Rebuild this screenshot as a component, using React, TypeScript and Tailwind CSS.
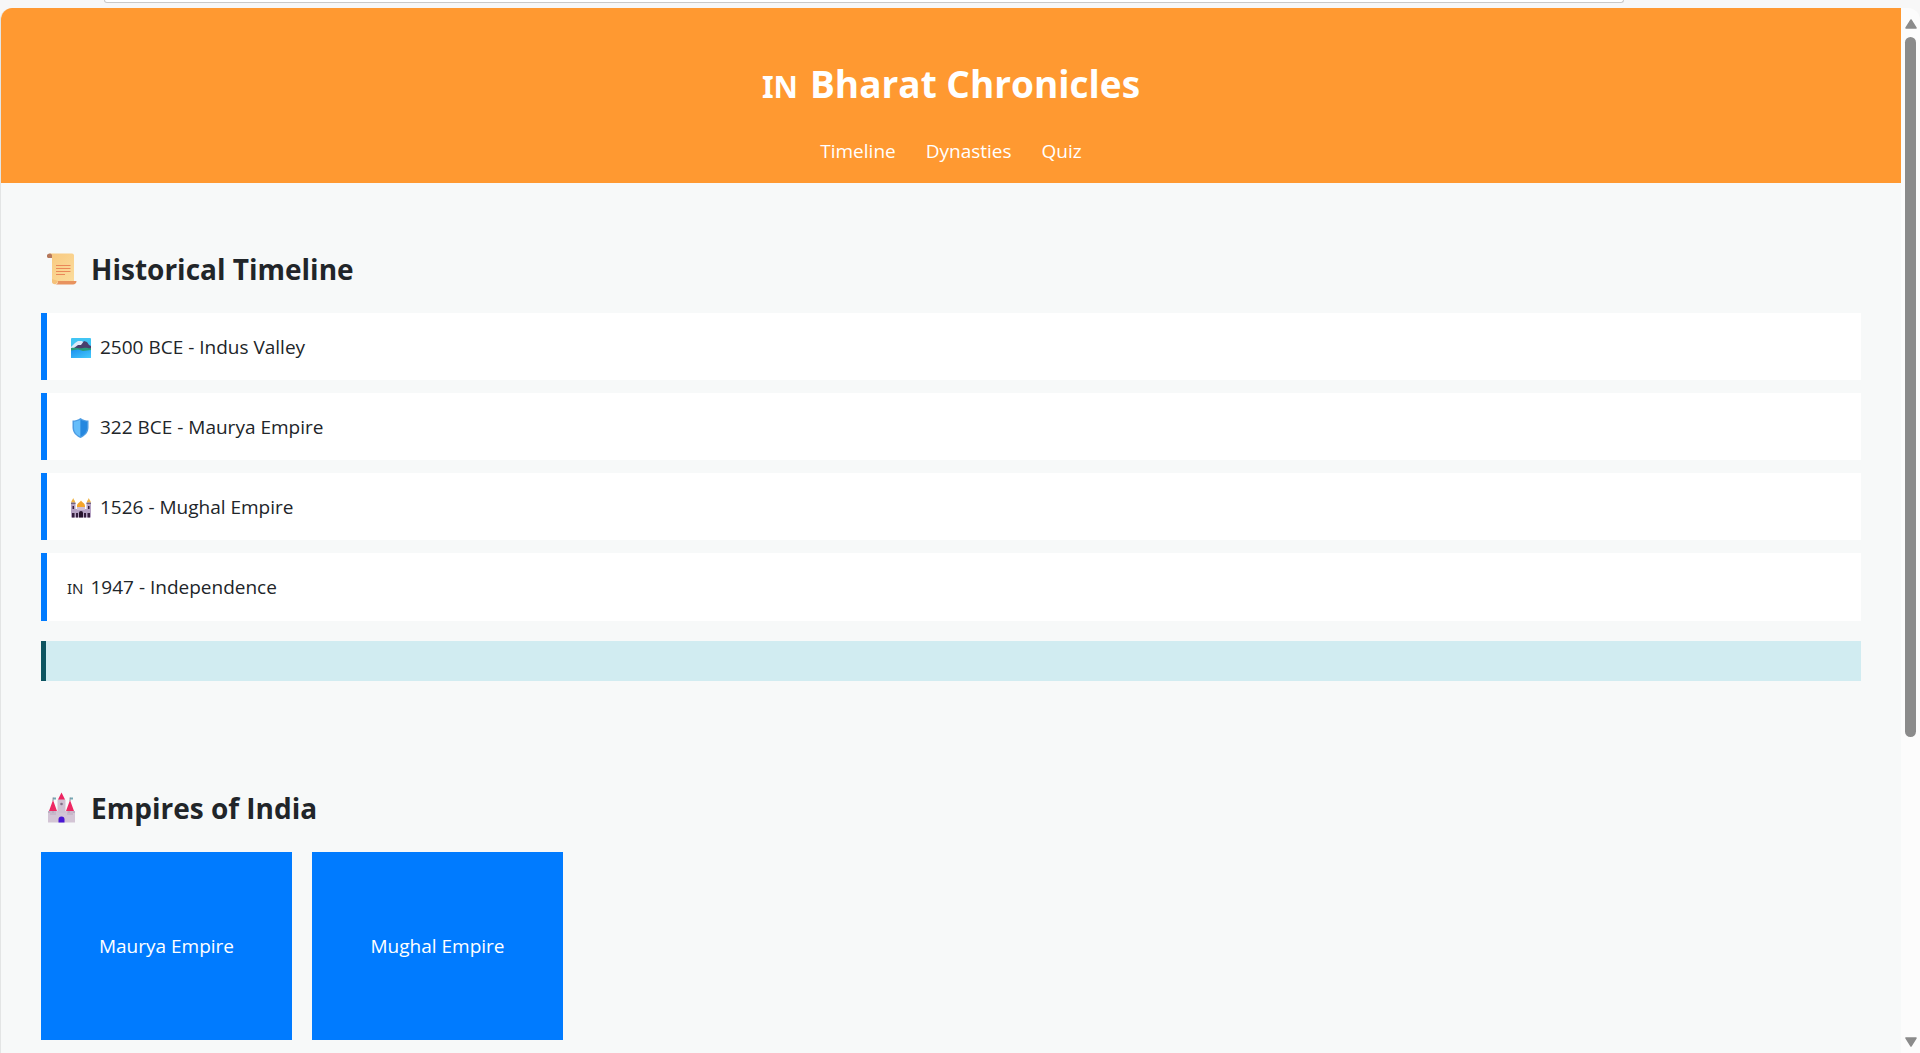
import type { ReactNode } from 'react';

const ScrollIcon = () => (
  <svg viewBox="0 0 30 32" className="w-[30px] h-8 shrink-0" aria-hidden="true">
    <defs>
      <linearGradient id="paper" x1="0" y1="0" x2="1" y2="1">
        <stop offset="0" stopColor="#f8c87e" />
        <stop offset="1" stopColor="#fbdc9c" />
      </linearGradient>
    </defs>
    <path d="M3 0.500h22a2 2 0 0 1 2 2V28H5V5H1.500A2.500 2.500 0 0 1 3 0.500z" fill="url(#paper)" />
    <path d="M3 0.500c-4 0-4 4.500-1 4.500h3V2.500c0-1-1-2-2-2z" fill="#b5785c" />
    <path d="M11 28h18.500c0 2-1.500 3.500-3.500 3.500H8c2 0 3-1.500 3-3.500z" fill="#e8935f" />
    <path d="M5 26v3c0 3 6 3 6-1z" fill="#f5c27a" />
    <path d="M9 12.500h14.500M9 15.500h14.500M9 18.500h14.500M9 21.500h9" stroke="#ea8758" strokeWidth="1" />
  </svg>
);

const CastleIcon = () => (
  <svg viewBox="0 0 30 32" className="w-[30px] h-8 shrink-0" aria-hidden="true">
    <path d="M1 19h27v11.500H1z" fill="#d3c5d5" />
    <path d="M3 17h6v6H3zM20 17h6v6h-6z" fill="#c7b8ca" />
    <path d="M10.500 8l4-3L18.500 8v13h-8z" fill="#cfc1d2" />
    <path d="M14.500 0.500L18 7.500h-7z" fill="#ec2460" />
    <path d="M6 8l4 11H2zM23 8l4 11h-8z" fill="#ed2863" />
    <path d="M6 5.500h3v2H6zM23 5.500h3v2h-3z" fill="#75a9b5" />
    <path d="M6 5.500V9M23 5.500V9" stroke="#8b8390" strokeWidth="0.800" />
    <circle cx="14.500" cy="12" r="1.300" fill="#837088" />
    <path d="M11.500 30.500v-3a3 3 0 0 1 6 0v3z" fill="#4a16d4" />
    <path d="M1 19h2v2H1zM5 19h2v2H5zM21 19h2v2h-2zM26 19h2v2h-2z" fill="#bdadc2" />
  </svg>
);

const LandscapeIcon = () => (
  <svg viewBox="0 0 20 20" className="size-5 shrink-0" aria-hidden="true">
    <defs>
      <linearGradient id="lake" x1="0" y1="0" x2="1" y2="1">
        <stop offset="0" stopColor="#1b8ff0" />
        <stop offset="1" stopColor="#46cbfb" />
      </linearGradient>
    </defs>
    <rect width="20" height="20" rx="1" fill="#41c5f4" />
    <path d="M0 9l4-4 3-2h4l2 2v5H0z" fill="#dceafa" />
    <path d="M3 10l4-3 3 0 3-4 3 1 2 3 2 1v4H3z" fill="#493f6c" />
    <path d="M0 10c5-1 8 1 12 0s6 1 8 0v4H0z" fill="#279b7b" />
    <path d="M0 12.500l7-1 5 1.500 8-1v8H0z" fill="url(#lake)" />
  </svg>
);

const ShieldIcon = () => (
  <svg viewBox="0 0 20 20" className="size-5 shrink-0" aria-hidden="true">
    <path d="M9.500 0C7 2 4 2.500 1.500 2.500v7c0 5 3.500 8.500 8 10.500 4.500-2 8-5.500 8-10.500v-7C15 2.500 12 2 9.500 0z" fill="#4d9ce3" />
    <path d="M9.500 1.500C7.500 3 5 3.500 3 3.700v6c0 4 2.500 7 6.500 8.800z" fill="#65bdfa" />
    <path d="M9.500 1.500c2 1.500 4.500 2 6.500 2.200v6c0 4-2.500 7-6.500 8.800z" fill="#2587df" />
  </svg>
);

const PalaceIcon = () => (
  <svg viewBox="0 0 20 20" className="size-5 shrink-0" aria-hidden="true">
    <path d="M0 5h4.500v14.500H0zM15.500 5H20v14.500h-4.500zM4 11h12v8.500H4z" fill="#b6a3c4" />
    <path d="M6 9h8v3H6z" fill="#d1bfd5" />
    <path d="M10 2.500c1 2 4.500 2.500 4 6.500H6c-.5-4 3-4.500 4-6.500z" fill="#f4a52c" />
    <path d="M2.200 0c.5 2 2 2.500 2 4.500h-4c0-2 1.500-2.500 2-4.500zM17.800 0c.5 2 2 2.500 2 4.500h-4c0-2 1.500-2.500 2-4.500z" fill="#efb343" />
    <path d="M0 4.500h4.500v1.500H0zM15.500 4.500H20v1.500h-4.500z" fill="#75647d" />
    <path d="M1.500 8h1.500v3H1.500zM17 8h1.500v3H17zM1 15h2.500v4.500H1zM16.500 15H19v4.500h-2.500zM5 15h2v4.500H5zM13 15h2v4.500h-2z" fill="#36203f" />
    <path d="M8 19.500V15a2 2 0 0 1 4 0v4.500z" fill="#26132d" />
  </svg>
);

const events: { icon?: ReactNode; label: string }[] = [
  { icon: <LandscapeIcon />, label: '2500 BCE - Indus Valley' },
  { icon: <ShieldIcon />, label: '322 BCE - Maurya Empire' },
  { icon: <PalaceIcon />, label: '1526 - Mughal Empire' },
  { label: '1947 - Independence' },
];

const empires = ['Maurya Empire', 'Mughal Empire'];

const links = [
  { href: '#timeline', label: 'Timeline' },
  { href: '#dynasties', label: 'Dynasties' },
  { href: '#quiz', label: 'Quiz' },
];

function Header() {
  return (
    <header className="bg-[#ff9931] text-white text-center pt-[49px] pb-[18px]">
      <h1 className="flex items-baseline justify-center gap-3 text-[37px] leading-[54px] font-bold">
        <span className="font-['Noto_Sans',sans-serif] text-[30px]">IN</span>
        Bharat Chronicles
      </h1>
      <nav className="mt-6 flex justify-center gap-[30px]">
        {links.map((link) => (
          <a key={link.href} href={link.href} className="hover:underline">
            {link.label}
          </a>
        ))}
      </nav>
    </header>
  );
}

function Timeline() {
  return (
    <section id="timeline" className="p-10">
      <h2 className="mt-[26px] flex items-center gap-[14px] pl-[6px] text-[28px] leading-10 font-bold">
        <ScrollIcon />
        Historical Timeline
      </h2>
      <ul className="mt-6 flex flex-col gap-[13px]">
        {events.map((event) => (
          <li key={event.label} className="bg-white border-l-6 border-[#007bff] px-5 pt-[21px] pb-[19px]">
            <button
              type="button"
              className={`flex w-full text-left cursor-pointer ${event.icon ? 'items-center' : 'items-baseline'}`}
            >
              {event.icon ? (
                <span className="mr-[9px] ml-1">{event.icon}</span>
              ) : (
                <span className="mr-[7px] font-['Noto_Sans',sans-serif] text-[15px]">IN</span>
              )}
              {event.label}
            </button>
          </li>
        ))}
      </ul>
      <div className="mt-5 h-10 bg-[#d1ecf1] border-l-5 border-[#0c5460]" />
    </section>
  );
}

function Dynasties() {
  return (
    <section id="dynasties" className="p-10">
      <h2 className="mt-[27px] flex items-center gap-[14px] pl-[6px] text-[28px] leading-10 font-bold">
        <CastleIcon />
        Empires of India
      </h2>
      <div className="mt-6 flex flex-wrap gap-5">
        {empires.map((name) => (
          <button
            key={name}
            type="button"
            className="w-[251px] h-[188px] bg-[#007bff] text-white font-medium cursor-pointer"
          >
            {name}
          </button>
        ))}
      </div>
    </section>
  );
}

function Scrollbar() {
  return (
    <div className="w-[19px] shrink-0 bg-[#fcfcfc] flex flex-col items-center pt-[11px] pb-[6px]">
      <svg viewBox="0 0 12 10" className="w-3 h-[10px] shrink-0" aria-hidden="true">
        <path d="M6 1l5 8H1z" fill="#8b8b8b" stroke="#8b8b8b" strokeWidth="1.500" strokeLinejoin="round" />
      </svg>
      <div className="mt-2 flex-1 w-full flex flex-col items-center">
        <div className="h-7/10 w-[11px] rounded-full bg-[#8b8b8b]" />
      </div>
      <svg viewBox="0 0 12 10" className="w-3 h-[10px] shrink-0" aria-hidden="true">
        <path d="M1 1h10L6 9z" fill="#8b8b8b" stroke="#8b8b8b" strokeWidth="1.500" strokeLinejoin="round" />
      </svg>
    </div>
  );
}

export default function App() {
  return (
    <div className="h-screen flex flex-col overflow-hidden bg-[#f7f7f7] font-['Open_Sans',sans-serif] text-[19px] leading-[27px] text-[#212529]">
      <div className="h-2 shrink-0 pl-[104px] pr-[296px]">
        <div className="h-[3px] rounded-b-xl border border-t-0 border-[#c9c9c9] bg-white" />
      </div>
      <div className="flex-1 min-h-0 flex overflow-hidden rounded-t-xl border-l border-[#e3e5e5]">
        <main className="flex-1 overflow-hidden bg-[#f7f9f9]">
          <Header />
          <Timeline />
          <Dynasties />
        </main>
        <Scrollbar />
      </div>
    </div>
  );
}
